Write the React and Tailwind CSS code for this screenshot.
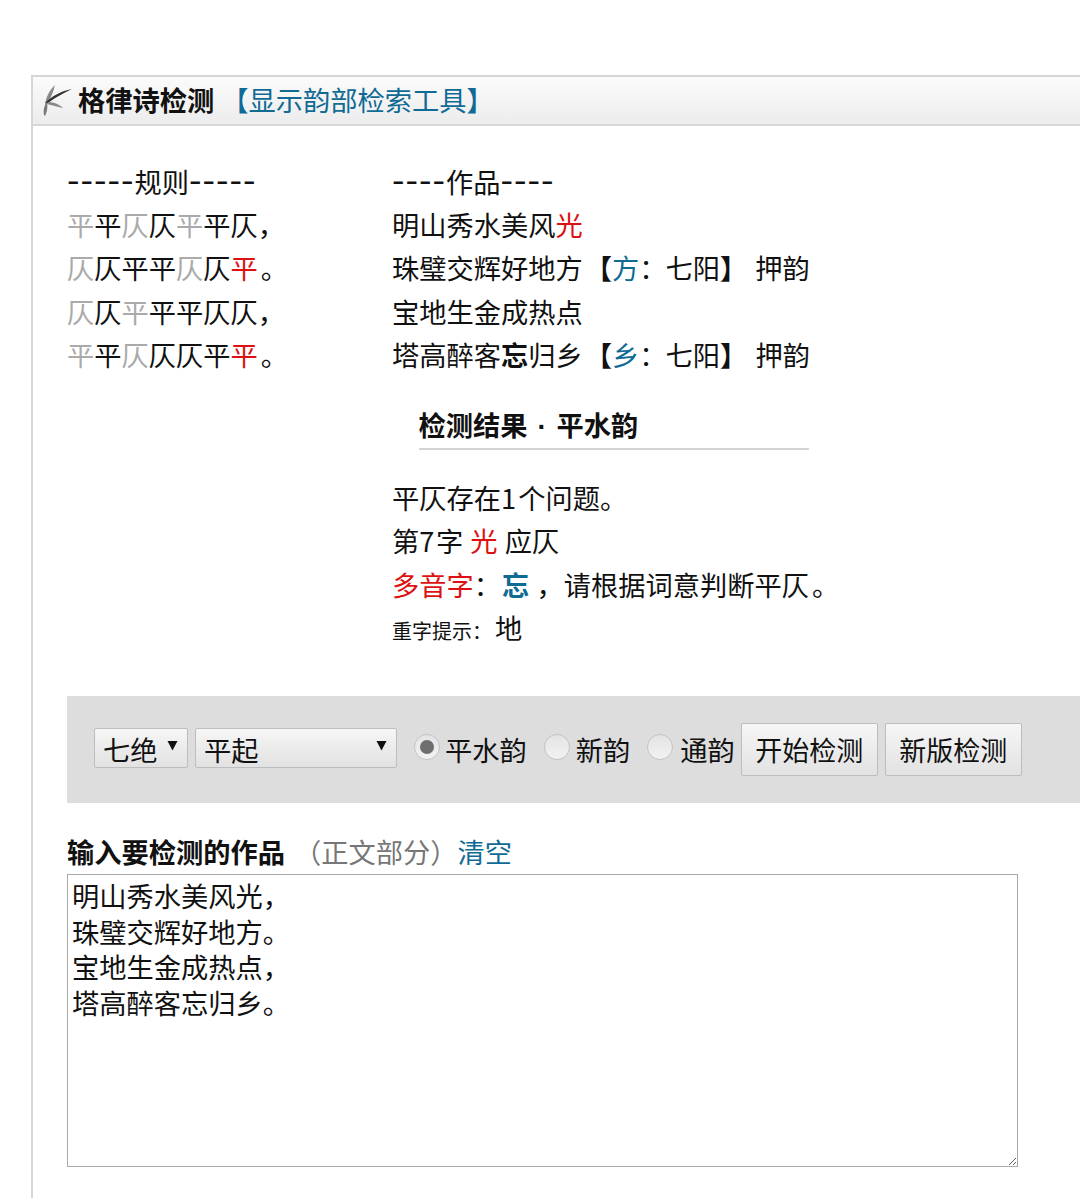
const GRAY = "text-[#aaaaaa]";
const RED = "text-[#dd1111]";
const BLUE = "text-[#0f6a94]";

const rules = [
  [["平", 1], ["平", 0], ["仄", 1], ["仄", 0], ["平", 1], ["平", 0], ["仄，", 0]],
  [["仄", 1], ["仄", 0], ["平平", 0], ["仄", 1], ["仄", 0], ["平", 2], ["。", 3]],
  [["仄", 1], ["仄", 0], ["平", 1], ["平平仄仄，", 0]],
  [["平", 1], ["平", 0], ["仄", 1], ["仄仄平", 0], ["平", 2], ["。", 3]],
];

function Dashes({ n }) {
  return <span className="text-[36px] leading-none tracking-[1px]">{"-".repeat(n)}</span>;
}

function Rhyme({ ch }) {
  return (
    <>
      <span className="font-bold ml-[2px]">【</span>
      <span className={BLUE}>{ch}</span>：<span className="ml-[-1px]">七阳</span>
      <span className="font-bold">】</span>
      <span className="ml-[8px]">押韵</span>
    </>
  );
}

function Radio({ checked }) {
  return (
    <span className="w-[26px] h-[26px] mt-[-5px] rounded-full border border-[#c4c4c4] bg-gradient-to-b from-[#e4e4e4] to-[#f2f2f2] flex items-center justify-center shrink-0">
      {checked && <span className="w-[14px] h-[14px] rounded-full bg-[#6e6e6e]" />}
    </span>
  );
}

function Select({ label, width }) {
  return (
    <div
      className={`${width} h-[40px] mb-[3px] pl-[8px] pr-[9px] flex items-center justify-between border border-[#bdbdbd] rounded-[2px] bg-gradient-to-b from-[#f6f6f6] to-[#e2e2e2]`}
    >
      <span className="mt-[3px]">{label}</span>
      <svg width="11" height="11" viewBox="0 0 11 11" className="mb-[5px]">
        <path d="M0.5 1h10L5.5 10.5z" fill="#111" />
      </svg>
    </div>
  );
}

function Btn({ children, width }) {
  return (
    <button className={`${width} h-[53px] border border-[#bdbdbd] rounded-[2px] bg-gradient-to-b from-[#f6f6f6] to-[#e2e2e2] text-[27px] text-[#111]`}>
      {children}
    </button>
  );
}

export default function App() {
  return (
    <div className="bg-white h-[1198px] overflow-hidden pt-[75px] pl-[31px] font-['Noto_Sans_CJK_SC','Noto_Sans',sans-serif] text-[27.25px] text-[#111] leading-[43.3px]">
      <div className="h-full border-l-2 border-t-2 border-[#d6d6d6]">
        <div className="h-[49px] flex items-center pl-[9px] pb-[2px] border-b-2 border-[#d8d8d8] bg-gradient-to-b from-[#fbfbfb] to-[#ececec]">
          <svg width="30" height="32" viewBox="0 0 30 32" className="mt-[2px] shrink-0 blur-[0.5px]">
            <path d="M3 20C4 12 7 6 13 0 11 8 8 14 6 18z" fill="#888" />
            <path d="M3 18C10 11 19 6 30 4 22 8 14 12 6 18z" fill="#333" />
            <path d="M6 17C11 17 17 19 21 23 15 22 10 20 5 19z" fill="#888" />
            <path d="M2 30C1 25 2 21 5 17 6 22 5 27 3 31z" fill="#777" />
          </svg>
          <span className="ml-[6px] font-bold text-[#111]">格律诗检测</span>
          <span className={`ml-[7px] ${BLUE}`}>【显示韵部检索工具】</span>
        </div>

        <div className="pl-[34px] pt-[32.7px]">
          <div className="flex">
            <div className="w-[325px] shrink-0">
              <div><Dashes n={5} />规则<Dashes n={5} /></div>
              {rules.map((line, i) => (
                <div key={i}>
                  {line.map(([text, kind], j) => (
                    <span key={j} className={kind === 1 ? GRAY : kind === 2 ? RED : kind === 3 ? "ml-[3px]" : ""}>{text}</span>
                  ))}
                </div>
              ))}
            </div>
            <div>
              <div><Dashes n={4} />作品<Dashes n={4} /></div>
              <div>明山秀水美风<span className={RED}>光</span></div>
              <div>珠璧交辉好地方<Rhyme ch="方" /></div>
              <div>宝地生金成热点</div>
              <div>塔高醉客<span className="font-bold">忘</span>归乡<Rhyme ch="乡" /></div>
              <div className="w-[390px] mt-[27px] ml-[26.5px] border-b-2 border-[#d4d4d4] font-bold">
                检测结果<span className="mx-[10px] font-['Liberation_Sans']">·</span>平水韵
              </div>
              <div className="mt-[25.6px]">平仄存在<span className="tracking-[2px]">1</span>个问题。</div>
              <div>第<span className="tracking-[1.5px]">7</span>字 <span className={`ml-[1px] ${RED}`}>光</span> <span className="ml-[1px]">应仄</span></div>
              <div>
                <span className={RED}>多音字</span>：
                <span className={`ml-[1px] font-bold ${BLUE}`}>忘</span> <span className="ml-[1px]">，</span>请根据词意判断平仄<span className="ml-[3px]">。</span>
              </div>
              <div>
                <span className="text-[20px]">重字提示：</span><span className="ml-[3px]">地</span>
              </div>
            </div>
          </div>

          <div className="mt-[43.9px] h-[107px] flex items-center pl-[27px] bg-[#dddddd]">
            <Select label="七绝" width="w-[94px]" />
            <div className="ml-[7px]"><Select label="平起" width="w-[202px]" /></div>
            <label className="ml-[17px] flex items-center gap-[5px]"><Radio checked />平水韵</label>
            <label className="ml-[17px] flex items-center gap-[6px]"><Radio />新韵</label>
            <label className="ml-[17px] flex items-center gap-[7px]"><Radio />通韵</label>
            <div className="ml-[6px] flex gap-[7px]">
              <Btn width="w-[137px]">开始检测</Btn>
              <Btn width="w-[137px]">新版检测</Btn>
            </div>
          </div>

          <div className="mt-[27px]">
            <span className="font-bold">输入要检测的作品</span>
            <span className="text-[#777777] ml-[9px]">（正文部分）</span>
            <span className={BLUE}>清空</span>
          </div>
          <textarea
            readOnly
            className="block w-[951px] h-[293px] mt-[1px] px-[4px] py-[3px] border border-[#aaaaaa] outline-none text-[27.25px] leading-[35.5px] text-[#111] resize"
            value={"明山秀水美风光，\n珠璧交辉好地方。\n宝地生金成热点，\n塔高醉客忘归乡。"}
          />
        </div>
      </div>
    </div>
  );
}
